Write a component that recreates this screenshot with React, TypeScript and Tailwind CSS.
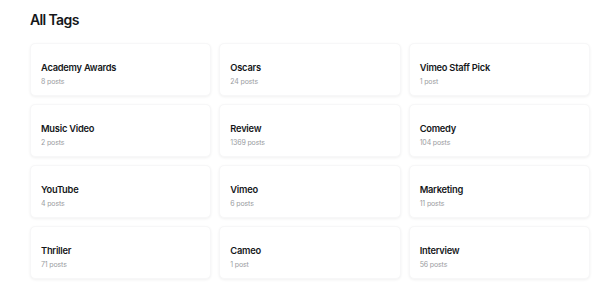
const tags = [
  { name: "Academy Awards", count: "8 posts" },
  { name: "Oscars", count: "24 posts" },
  { name: "Vimeo Staff Pick", count: "1 post" },
  { name: "Music Video", count: "2 posts" },
  { name: "Review", count: "1369 posts" },
  { name: "Comedy", count: "104 posts" },
  { name: "YouTube", count: "4 posts" },
  { name: "Vimeo", count: "6 posts" },
  { name: "Marketing", count: "11 posts" },
  { name: "Thriller", count: "71 posts" },
  { name: "Cameo", count: "1 post" },
  { name: "Interview", count: "56 posts" },
];

export default function App() {
  return (
    <div className="min-h-screen bg-white pl-[30px] pr-[10px] pt-[10px] font-['Inter',sans-serif] text-[#15171a]">
      <h1 className="text-[14px] font-semibold leading-[20px] tracking-[-0.045em]">All Tags</h1>
      <div className="mt-[13px] grid grid-cols-3 gap-[8px]">
        {tags.map((tag) => (
          <a
            key={tag.name}
            href="#"
            className="flex h-[53px] flex-col rounded-[5px] border border-[#f7f7f8] bg-white px-[10px] pt-[17px] shadow-[0_1px_3px_rgba(0,0,0,0.06)]"
          >
            <span className="text-[9.3px] font-semibold leading-[13px] tracking-[-0.025em]">{tag.name}</span>
            <span className="mt-[3px] text-[7px] leading-[9px] tracking-[-0.02em] text-[#9a9ca1]">{tag.count}</span>
          </a>
        ))}
      </div>
    </div>
  );
}
